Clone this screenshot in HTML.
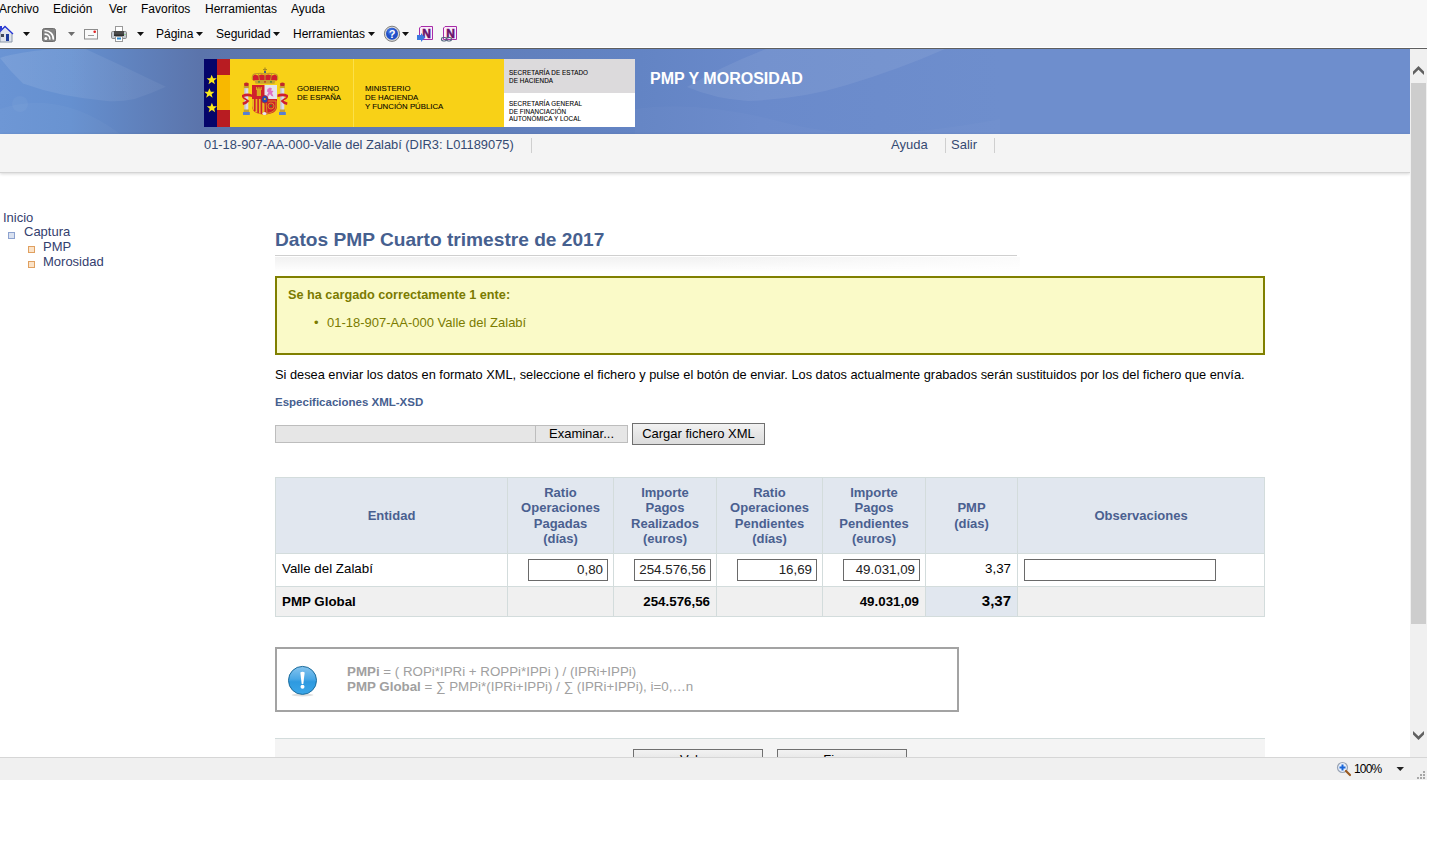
<!DOCTYPE html>
<html><head><meta charset="utf-8">
<style>
*{box-sizing:border-box}
html,body{margin:0;padding:0}
body{width:1440px;height:860px;overflow:hidden;background:#fff;position:relative;font-family:"Liberation Sans",sans-serif;}
.a{position:absolute;white-space:nowrap}
#win{left:0;top:0;width:1427px;height:780px;background:#f7f7f7;overflow:hidden}
#menu{left:0;top:0;height:20px;font-size:12px;color:#000;width:600px}
#cmd{left:0;top:20px;height:27px;font-size:12px;color:#000;width:600px}
#wline{left:0;top:47px;width:1427px;height:1px;background:#fff}
#dline{left:0;top:48px;width:1427px;height:1px;background:#5f5f5f}
#page{left:0;top:49px;width:1410px;height:708px;background:#fff;overflow:hidden}
#hdr{left:0;top:0;width:1410px;height:85px;background:#6d8fce;overflow:hidden}
#sub{left:0;top:85px;width:1410px;height:39px;background:#f4f4f4;border-bottom:1px solid #d4d4d4;box-shadow:0 1px 3px rgba(0,0,0,.16)}
#sb{left:1410px;top:49px;width:17px;height:708px;background:#f0f0f0}
#status{left:0;top:757px;width:1427px;height:23px;background:#f0f0f0;border-top:1px solid #d6d6d6}
.nav{font-size:13px;color:#34406e}
.th{font-weight:bold;color:#4a6090;font-size:13px;text-align:center;line-height:15.5px}
.sep{width:1px;background:#cfcfcf}
table.t{position:absolute;border-collapse:collapse;table-layout:fixed}
table.t td{border:1px solid #d3dcdc;padding:0 5px;font-size:13.33px;color:#000}
table.t tr.h td{background:#e1e7ef;font-weight:bold;color:#4a6090;font-size:13px;text-align:center;line-height:15.5px}
.inp{display:inline-block;height:22px;border:1px solid #6a6a6a;background:#fff;text-align:right;padding:0 4px 0 0;line-height:20px;font-size:13.33px;color:#222;vertical-align:middle}
.tl{background:#d3dcdc}
.td{font-size:13.33px;color:#000}
.b{font-weight:bold}
.info{font-size:13.33px;color:#a0a0a0;line-height:15px}
.btn{height:22px;border:1px solid #707070;background:linear-gradient(#f2f2f2,#e6e6e6 50%,#dcdcdc);font-size:13px;text-align:center;line-height:20px}
.lg{font-size:8px;line-height:9px;color:#000;-webkit-text-stroke:0.08px #000}
.ls{font-size:6.3px;line-height:7.5px;color:#000;letter-spacing:0.1px;-webkit-text-stroke:0.08px #000}
</style></head><body>
<div id="win" class="a">
  <div id="menu" class="a">
    <span class="a" style="left:-1px;top:2px">Archivo</span>
    <span class="a" style="left:53px;top:2px">Edición</span>
    <span class="a" style="left:109px;top:2px">Ver</span>
    <span class="a" style="left:141px;top:2px">Favoritos</span>
    <span class="a" style="left:205px;top:2px">Herramientas</span>
    <span class="a" style="left:291px;top:2px">Ayuda</span>
  </div>
  <div id="cmd" class="a">
    <span class="a" style="left:156px;top:7px">Página</span>
    <span class="a" style="left:216px;top:7px">Seguridad</span>
    <span class="a" style="left:293px;top:7px">Herramientas</span>
  </div>

  <!-- toolbar icons -->
  <svg class="a" style="left:0;top:20px" width="470" height="27" viewBox="0 20 470 27">
    <!-- home -->
    <rect x="0" y="26" width="2" height="4" fill="#2a3ad0"/>
    <path d="M0 31 L5 26.5 L12 33 L12 42 L0 42 Z" fill="#dfe4ec" stroke="#8a97a8" stroke-width="1"/>
    <path d="M-1 32.5 L5 26.5 L13 34" fill="none" stroke="#2838d8" stroke-width="1.3"/>
    <rect x="1" y="34" width="3" height="3" fill="#404858"/>
    <rect x="6" y="34" width="3" height="7" fill="#1c3c9c"/>
    <!-- arrow -->
    <path d="M23 32 L30 32 L26.5 36 Z" fill="#111"/>
    <!-- rss -->
    <rect x="42.5" y="28.5" width="13" height="13" rx="2" fill="#838383" stroke="#6e6e6e"/>
    <circle cx="45.8" cy="38.4" r="1.5" fill="#fff"/>
    <path d="M44.5 34.2 A4.5 4.5 0 0 1 49.8 39.6" fill="none" stroke="#fff" stroke-width="1.6"/>
    <path d="M44.5 30.8 A8 8 0 0 1 53.3 39.6" fill="none" stroke="#fff" stroke-width="1.6"/>
    <path d="M68 32 L75 32 L71.5 36 Z" fill="#6e6e6e"/>
    <!-- mail -->
    <rect x="84.5" y="29.5" width="13" height="9.5" fill="#fafafa" stroke="#8d8d8d"/>
    <circle cx="94.7" cy="31.7" r="1.3" fill="#e02020"/>
    <rect x="88" y="35" width="6" height="1" fill="#9a9a9a"/>
    <!-- printer -->
    <rect x="115.5" y="26.5" width="7" height="5" fill="#fff" stroke="#9a9a9a"/>
    <rect x="111.5" y="31.5" width="15" height="7" rx="1.2" fill="#c4cad2" stroke="#8a8a8a"/>
    <rect x="114" y="31" width="10" height="5" fill="#4a4a4a"/>
    <rect x="114" y="34.5" width="10" height="1.5" fill="#2e2e2e"/>
    <rect x="124.5" y="34" width="1" height="1" fill="#60d060"/>
    <rect x="115.5" y="36.5" width="7" height="5" fill="#fff" stroke="#9a9a9a"/>
    <rect x="117" y="37.5" width="4" height="2" fill="#2a8ad0"/>
    <path d="M137 32 L144 32 L140.5 36 Z" fill="#111"/>
    <!-- menu arrows -->
    <path d="M196 32 L203 32 L199.5 36 Z" fill="#111"/>
    <path d="M273 32 L280 32 L276.5 36 Z" fill="#111"/>
    <path d="M368 32 L375 32 L371.5 36 Z" fill="#111"/>
    <!-- help -->
    <circle cx="392" cy="33.8" r="7.6" fill="#d8d8d8" stroke="#808080" stroke-width="1"/>
    <circle cx="392" cy="33.8" r="6" fill="#2150c8"/>
    <circle cx="391" cy="31.5" r="3.5" fill="#4a7ae8" opacity=".6"/>
    <text x="392" y="38" font-family="Liberation Sans" font-weight="bold" font-size="11" fill="#fff" text-anchor="middle">?</text>
    <path d="M402 32 L409 32 L405.5 36 Z" fill="#111"/>
    <!-- onenote 1 -->
    <path d="M421 26.5 L432.5 26.5 L432.5 39.5 L419.5 39.5 L419.5 28 Z" fill="#fbeefb" stroke="#a82ca8" stroke-width="1"/>
    <text x="426.5" y="37.5" font-family="Liberation Sans" font-weight="bold" font-size="12" fill="#6a106a" stroke="#6a106a" stroke-width=".5" text-anchor="middle">N</text>
    <path d="M417 35 L421 35 L421 33 L425 37.5 L421 42 L421 40 L417 40 Z" fill="#3a78e0"/>
    <!-- onenote 2 -->
    <path d="M445 26.5 L456.5 26.5 L456.5 39.5 L443.5 39.5 L443.5 28 Z" fill="#fbeefb" stroke="#a82ca8" stroke-width="1"/>
    <text x="450.5" y="37.5" font-family="Liberation Sans" font-weight="bold" font-size="12" fill="#6a106a" stroke="#6a106a" stroke-width=".5" text-anchor="middle">N</text>
    <rect x="441.5" y="37.5" width="5" height="3.5" rx="1.7" fill="none" stroke="#50607a" stroke-width="1.2"/>
    <rect x="446.5" y="37.5" width="5" height="3.5" rx="1.7" fill="none" stroke="#50607a" stroke-width="1.2"/>
  </svg>
  <div id="wline" class="a"></div>
  <div id="dline" class="a"></div>
  <div id="page" class="a">
    <div id="hdr" class="a">
      

      <div class="a" style="left:0;top:0;width:1410px;height:85px;background:linear-gradient(90deg,#6a94d4 0px,#6590d0 70px,#5b74ab 200px,#6384c4 640px,#6a8acb 760px,#6e8ecd 1000px)"></div>
      <svg class="a" style="left:0;top:0" width="210" height="85" viewBox="0 0 210 85">
        <defs><linearGradient id="lf" x1="0" x2="1" y1="0" y2="0"><stop offset="0" stop-color="#fff" stop-opacity=".10"/><stop offset="1" stop-color="#fff" stop-opacity=".05"/></linearGradient></defs>
        <path d="M0 9 Q5 7 10.7 6 Q50 -2 85.6 0 Q125 18 165.8 37.7 Q150 45 134.5 50 Q120 53 107 52 Q60 48 23 34.6 Q10 22 0 9 Z" fill="url(#lf)"/>
        <path d="M0 60 Q60 40 120 85 L0 85 Z" fill="#fff" opacity=".03"/>
        <circle cx="20" cy="55" r="8" fill="#fff" opacity=".04"/>
      </svg>
      <svg class="a" style="left:635px;top:0" width="400" height="85" viewBox="635 0 400 85">
        <path d="M687 38 Q720 18 766 0 L945 0 Q900 20 847 36 Q802 50 748 52 Q715 50 687 38 Z" fill="#fff" opacity=".07"/>
        <path d="M635 60 Q700 50 790 75 Q870 95 1000 70 L1000 85 L635 85 Z" fill="#fff" opacity=".025"/>
      </svg>
      <!-- logo (page coords: y-49) -->
      <div class="a" style="left:204px;top:10px;width:431px;height:68px;background:#f8d117;overflow:hidden">
        <div class="a" style="left:0;top:0;width:13px;height:68px;background:#05056a"></div>
        <div class="a" style="left:13px;top:0;width:13px;height:68px;background:#b81c22"></div>
        <div class="a" style="left:13px;top:16px;width:13px;height:35px;background:#f8b800"></div>
        <svg class="a" style="left:0;top:0" width="13" height="68" viewBox="0 0 13 68">
          <g fill="#f8e81c">
            <path id="st" d="M0 -4 L1.1 -1.3 L3.9 -1.3 L1.7 0.5 L2.5 3.3 L0 1.6 L-2.5 3.3 L-1.7 0.5 L-3.9 -1.3 L-1.1 -1.3 Z" transform="translate(7.7 21) scale(1.3)"/>
            <use href="#st" transform="translate(-2.3 13.5)"/>
            <use href="#st" transform="translate(0.2 28)"/>
          </g>
        </svg>
        <div class="a" style="left:149px;top:0;width:1px;height:68px;background:#fbe04a"></div>
        <div class="a" style="left:300px;top:0;width:131px;height:34px;background:#dcdadc"></div>
        <div class="a" style="left:300px;top:34px;width:131px;height:34px;background:#fff"></div>
        <!-- coat of arms -->
        <svg class="a" style="left:34px;top:5px" width="56" height="56" viewBox="0 0 56 56">
          <!-- crown -->
          <rect x="26.4" y="3.5" width="1.2" height="6" fill="#a88820"/>
          <rect x="25" y="5" width="4" height="1.1" fill="#a88820"/>
          <circle cx="27" cy="8" r="1" fill="#2848a0"/>
          <path d="M15 16.5 Q13.5 11 17.5 10.5 Q20 12 21.5 11 Q24 10 27 11.5 Q30 10 32.5 11 Q34 12 36.5 10.5 Q40.5 11 39 16.5 Z" fill="#d0202c"/>
          <path d="M14.5 16 Q13 9 20 9.5 Q24 9 27 10 Q30 9 34 9.5 Q41 9 39.5 16" fill="none" stroke="#c09a28" stroke-width="1.1"/>
          <path d="M20.5 10 Q21 14 21.5 16.5 M27 10 L27 16.5 M33.5 10 Q33 14 32.5 16.5" fill="none" stroke="#c09a28" stroke-width="1"/>
          <path d="M16.5 16 L37.5 16 L36.5 19.8 L17.5 19.8 Z" fill="#c8a030"/>
          <circle cx="21" cy="17.9" r=".8" fill="#208040"/><circle cx="27" cy="17.9" r=".8" fill="#c02020"/><circle cx="33" cy="17.9" r=".8" fill="#208040"/>
          <!-- pillars -->
          <g id="pil">
            <path d="M6 19.5 Q8.3 17.5 10.8 19.5 L10.5 22 L6.3 22 Z" fill="#c0282c"/>
            <rect x="5.8" y="22" width="5.2" height="2.2" fill="#c8a030"/>
            <rect x="6.5" y="24.2" width="3.8" height="22" fill="#d8dcec"/>
            <rect x="6.5" y="24.2" width="1" height="22" fill="#b8bcd0"/>
            <rect x="5.8" y="45.5" width="5.2" height="2.5" fill="#c8a030"/>
            <rect x="5" y="48" width="6.8" height="3" fill="#5a80d0"/>
          </g>
          <use href="#pil" transform="translate(36 0)"/>
          <!-- ribbons -->
          <path d="M4 31 Q9 28.5 14 30.5 L14 33 Q9 31.5 5.5 33 Q9 35 11.5 37 Q9 40 5 41 L4.5 38.5 Q7.5 37.5 8.5 36.5 Q5 35 4 33 Z" fill="#d0202c"/>
          <path d="M50 31 Q45 28.5 39.5 30.5 L39.5 33 Q45 31.5 48.5 33 Q45 35 42.5 37 Q45 40 49 41 L49.5 38.5 Q46.5 37.5 45.5 36.5 Q49 35 50 33 Z" fill="#d0202c"/>
          <!-- shield -->
          <path d="M14 21 L39 21 L39 42 Q39 50 26.5 50.5 Q14 50 14 42 Z" fill="#d0202c"/>
          <rect x="26.5" y="21" width="12.5" height="14" fill="#e4e4ec"/>
          <path d="M29.5 25 L32 23.5 L34 24.5 L33 26.5 L35.5 27 L34 29 L35.5 32.5 L33.5 32 L32 30 L30 32.5 L29 31 L30.5 28.5 L29 27.5 Z" fill="#e070c0"/>
          <path d="M18 26 L18 23 L19.2 23 L19.2 24.5 L20.3 24.5 L20.3 23 L21.5 23 L21.5 24.5 L22.6 24.5 L22.6 23 L23.8 23 L23.8 26 L23 26 L23 32 L18.8 32 L18.8 26 Z" fill="#d8a820"/>
          <path d="M14 35 L26.5 35 L26.5 50.3 Q17 49.5 14.8 45 L14 42 Z" fill="#e8b820"/>
          <rect x="16" y="35" width="1.6" height="12" fill="#d0202c"/>
          <rect x="19.3" y="35" width="1.6" height="14" fill="#d0202c"/>
          <rect x="22.6" y="35" width="1.6" height="15" fill="#d0202c"/>
          <path d="M28 37 L38 37 L38 42 Q38 48 29 49.5 Z" fill="none" stroke="#d8a820" stroke-width=".8"/>
          <circle cx="33" cy="42" r="3" fill="none" stroke="#d8a820" stroke-width=".8"/>
          <circle cx="33" cy="42" r=".9" fill="#208040"/>
          <ellipse cx="26.8" cy="35.3" rx="3.3" ry="3.8" fill="#2848b0" stroke="#c02020" stroke-width=".8"/>
          <circle cx="26.8" cy="35" r="1" fill="#e8b820"/>
          <ellipse cx="26.5" cy="49.5" rx="2" ry="1.5" fill="#e8e8f0"/>
        </svg>
        <div class="a lg" style="left:93px;top:25px;font-size:7.8px">GOBIERNO<br>DE ESPAÑA</div>
        <div class="a lg" style="left:161px;top:25px;font-size:7.8px;line-height:9px">MINISTERIO<br>DE HACIENDA<br>Y FUNCIÓN PÚBLICA</div>
        <div class="a ls" style="left:305px;top:10px">SECRETARÍA DE ESTADO<br>DE HACIENDA</div>
        <div class="a ls" style="left:305px;top:41px">SECRETARÍA GENERAL<br>DE FINANCIACIÓN<br>AUTONÓMICA Y LOCAL</div>
      </div>
      <div class="a" style="left:650px;top:21px;font-size:16px;font-weight:bold;color:#fff">PMP Y MOROSIDAD</div>
    </div>
    <div id="sub" class="a">
      <div class="a" style="left:204px;top:3px;font-size:12.87px;color:#354a72">01-18-907-AA-000-Valle del Zalabí (DIR3: L01189075)</div>
      <div class="a sep" style="left:531px;top:4px;height:15px"></div>
      <div class="a" style="left:891px;top:3px;font-size:13px;color:#354a72">Ayuda</div>
      <div class="a sep" style="left:945px;top:4px;height:15px"></div>
      <div class="a" style="left:951px;top:3px;font-size:13px;color:#354a72">Salir</div>
      <div class="a sep" style="left:994px;top:4px;height:15px"></div>
    </div>
    <!-- nav -->
    <div class="a nav" style="left:3px;top:161px">Inicio</div>
    <div class="a" style="left:8px;top:183px;width:7px;height:7px;border:1px solid #8da2cf;background:#d9e1f0"></div>
    <div class="a nav" style="left:24px;top:175px">Captura</div>
    <div class="a" style="left:28px;top:197px;width:7px;height:7px;border:1px solid #e0a060;background:#fbe3c8"></div>
    <div class="a nav" style="left:43px;top:190px">PMP</div>
    <div class="a" style="left:28px;top:212px;width:7px;height:7px;border:1px solid #e0a060;background:#fbe3c8"></div>
    <div class="a nav" style="left:43px;top:205px">Morosidad</div>
    <!-- title -->
    <div class="a" style="left:275px;top:180px;font-size:19.15px;font-weight:bold;color:#46608f">Datos PMP Cuarto trimestre de 2017</div>
    <div class="a" style="left:275px;top:206px;width:742px;height:1px;background:#cfcfcf"></div>
    <div class="a" style="left:275px;top:208px;width:745px;height:15px;background:linear-gradient(90deg,rgba(255,255,255,0) 55%,rgba(255,255,255,.7) 100%),linear-gradient(#f1f1f1,#fff)"></div>
    <!-- yellow box -->
    <div class="a" style="left:275px;top:227px;width:990px;height:79px;border:2px solid #808000;background:#fafac8">
      <div class="a" style="left:11px;top:10px;font-size:12.7px;font-weight:bold;color:#7b7b00">Se ha cargado correctamente 1 ente:</div>
      <div class="a" style="left:37px;top:37px;font-size:13px;color:#7b7b00">•</div>
      <div class="a" style="left:50px;top:37px;font-size:13px;color:#7b7b00">01-18-907-AA-000 Valle del Zalabí</div>
    </div>
    <div class="a" style="left:275px;top:318px;font-size:12.8px;color:#000">Si desea enviar los datos en formato XML, seleccione el fichero y pulse el botón de enviar. Los datos actualmente grabados serán sustituidos por los del fichero que envía.</div>
    <div class="a" style="left:275px;top:347px;font-size:11.5px;font-weight:bold;color:#46608f">Especificaciones XML-XSD</div>
    <!-- file input -->
    <div class="a" style="left:275px;top:376px;width:261px;height:18px;border:1px solid #bdbdbd;background:#e6e6e6"></div>
    <div class="a" style="left:535px;top:376px;width:93px;height:18px;border:1px solid #bdbdbd;background:#e6e6e6;font-size:13px;text-align:center;line-height:16px">Examinar...</div>
    <div class="a" style="left:632px;top:374px;width:133px;height:22px;border:1px solid #707070;background:linear-gradient(#f2f2f2,#e6e6e6 50%,#dcdcdc);font-size:13px;text-align:center;line-height:20px">Cargar fichero XML</div>
    <!-- table -->
    <div class="a" style="left:275px;top:428px;width:990px;height:76px;background:#e1e7ef"></div>
    <div class="a" style="left:275px;top:537px;width:990px;height:30px;background:#f0f0f0"></div>
    <div class="a" style="left:925px;top:537px;width:92px;height:30px;background:#e1e7ef"></div>
    <div class="a tl" style="left:275px;top:428px;width:990px;height:1px"></div>
    <div class="a tl" style="left:275px;top:504px;width:990px;height:1px"></div>
    <div class="a tl" style="left:275px;top:537px;width:990px;height:1px"></div>
    <div class="a tl" style="left:275px;top:567px;width:990px;height:1px"></div>
    <div class="a tl" style="left:275px;top:428px;width:1px;height:140px"></div>
    <div class="a tl" style="left:507px;top:428px;width:1px;height:140px"></div>
    <div class="a tl" style="left:613px;top:428px;width:1px;height:140px"></div>
    <div class="a tl" style="left:716px;top:428px;width:1px;height:140px"></div>
    <div class="a tl" style="left:822px;top:428px;width:1px;height:140px"></div>
    <div class="a tl" style="left:925px;top:428px;width:1px;height:140px"></div>
    <div class="a tl" style="left:1017px;top:428px;width:1px;height:140px"></div>
    <div class="a tl" style="left:1264px;top:428px;width:1px;height:140px"></div>
    <div class="a th" style="left:276px;top:429px;width:231px;height:75px;display:flex;align-items:center;justify-content:center"><div>Entidad</div></div>
    <div class="a th" style="left:508px;top:429px;width:105px;height:75px;display:flex;align-items:center;justify-content:center"><div>Ratio<br>Operaciones<br>Pagadas<br>(días)</div></div>
    <div class="a th" style="left:614px;top:429px;width:102px;height:75px;display:flex;align-items:center;justify-content:center"><div>Importe<br>Pagos<br>Realizados<br>(euros)</div></div>
    <div class="a th" style="left:717px;top:429px;width:105px;height:75px;display:flex;align-items:center;justify-content:center"><div>Ratio<br>Operaciones<br>Pendientes<br>(días)</div></div>
    <div class="a th" style="left:823px;top:429px;width:102px;height:75px;display:flex;align-items:center;justify-content:center"><div>Importe<br>Pagos<br>Pendientes<br>(euros)</div></div>
    <div class="a th" style="left:926px;top:429px;width:91px;height:75px;display:flex;align-items:center;justify-content:center"><div>PMP<br>(días)</div></div>
    <div class="a th" style="left:1018px;top:429px;width:246px;height:75px;display:flex;align-items:center;justify-content:center"><div>Observaciones</div></div>
    <div class="a td" style="left:282px;top:512px">Valle del Zalabí</div>
    <div class="a inp" style="left:528px;top:510px;width:80px">0,80</div>
    <div class="a inp" style="left:634px;top:510px;width:77px">254.576,56</div>
    <div class="a inp" style="left:737px;top:510px;width:80px">16,69</div>
    <div class="a inp" style="left:843px;top:510px;width:77px">49.031,09</div>
    <div class="a td" style="left:925px;width:86px;text-align:right;top:512px">3,37</div>
    <div class="a inp" style="left:1024px;top:510px;width:192px"></div>
    <div class="a td b" style="left:282px;top:545px">PMP Global</div>
    <div class="a td b" style="left:613px;width:97px;text-align:right;top:545px">254.576,56</div>
    <div class="a td b" style="left:822px;width:97px;text-align:right;top:545px">49.031,09</div>
    <div class="a td b" style="left:925px;width:86px;text-align:right;top:543px;font-size:15px">3,37</div>
    <div class="a" style="left:275px;top:598px;width:684px;height:65px;border:2px solid #a3a3a3;background:#fff"></div>
    <svg class="a" style="left:286px;top:615px" width="34" height="34" viewBox="286 664 34 34">
      <defs><linearGradient id="ib" x1="0" x2="0" y1="0" y2="1"><stop offset="0" stop-color="#86c4ee"/><stop offset=".45" stop-color="#4aa8e6"/><stop offset=".55" stop-color="#2e9ae0"/><stop offset="1" stop-color="#3aa6e8"/></linearGradient></defs>
      <ellipse cx="302.5" cy="695" rx="11" ry="1.5" fill="#000" opacity=".12"/>
      <circle cx="302.5" cy="680.4" r="14" fill="url(#ib)" stroke="#1c6c9c" stroke-width="1"/>
      <path d="M300.3 672.5 Q302.5 671 304.7 672.5 L303.3 684 L301.7 684 Z" fill="#fff"/>
      <circle cx="302.5" cy="686.8" r="2" fill="#fff"/>
    </svg>
    <div class="a info" style="left:347px;top:615px"><b>PMPi</b> = ( ROPi*IPRi + ROPPi*IPPi ) / (IPRi+IPPi)<br><b>PMP Global</b> = ∑ PMPi*(IPRi+IPPi) / ∑ (IPRi+IPPi), i=0,…n</div>
    <div class="a" style="left:275px;top:689px;width:990px;height:40px;border-top:1px solid #d3dcdc;background:#f4f4f4"></div>
    <div class="a btn" style="left:633px;top:700px;width:130px">Volver</div>
    <div class="a btn" style="left:777px;top:700px;width:130px">Firmar</div>
  </div>
  <div id="sb" class="a">
    <svg class="a" style="left:0;top:0" width="17" height="708" viewBox="0 0 17 708">
      <path d="M3 22.5 L8.5 17 L14 22.5 L14 26 L8.5 20.8 L3 26 Z" fill="#606060"/>
      <rect x="1" y="34" width="15" height="541" fill="#cdcdcd"/>
      <path d="M3 682 L8.5 687.2 L14 682 L14 685.5 L8.5 691 L3 685.5 Z" fill="#606060"/>
    </svg>
  </div>
  <div id="status" class="a">
    <svg class="a" style="left:1336px;top:3px" width="16" height="16" viewBox="0 0 16 16">
      <circle cx="6.5" cy="6.5" r="5" fill="#e8f0fb" stroke="#9aa4b4" stroke-width="1.2"/>
      <path d="M5.5 3.5 h2 v2 h2 v2 h-2 v2 h-2 v-2 h-2 v-2 h2 z" fill="#1a66d8"/>
      <path d="M10 10 L14 14" stroke="#9a5a20" stroke-width="2.2" stroke-linecap="round"/>
    </svg>
    <div class="a" style="left:1354px;top:4px;font-size:12px;letter-spacing:-0.8px;color:#000">100%</div>
    <path></path>
    <svg class="a" style="left:1396px;top:9px" width="9" height="5" viewBox="0 0 9 5"><path d="M0.5 0 L8 0 L4.25 4 Z" fill="#222"/></svg>
    <svg class="a" style="left:1416px;top:12px" width="10" height="10" viewBox="0 0 10 10" fill="#a8a8a8">
      <rect x="7" y="1" width="2" height="2"/><rect x="4" y="4" width="2" height="2"/><rect x="7" y="4" width="2" height="2"/>
      <rect x="1" y="7" width="2" height="2"/><rect x="4" y="7" width="2" height="2"/><rect x="7" y="7" width="2" height="2"/>
    </svg>
  </div>
</div>
</body></html>
